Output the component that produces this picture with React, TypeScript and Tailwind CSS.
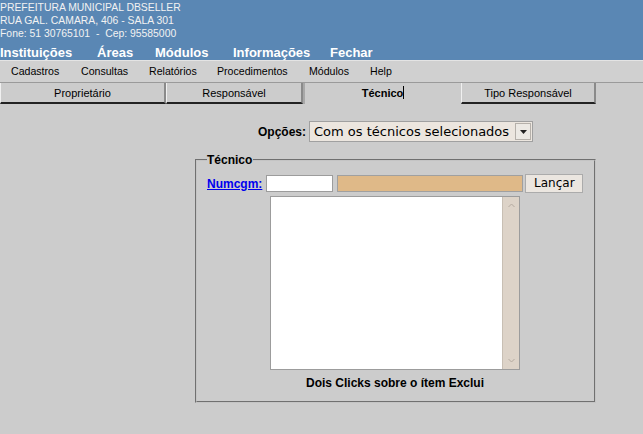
import React from 'react';

const menuTop = [
  { label: 'Instituições', width: 'w-[97px]' },
  { label: 'Áreas', width: 'w-[58px]' },
  { label: 'Módulos', width: 'w-[78px]' },
  { label: 'Informações', width: 'w-[97px]' },
  { label: 'Fechar', width: 'w-[60px]' },
];

const menuSub = [
  { label: 'Cadastros', width: 'w-[70px]' },
  { label: 'Consultas', width: 'w-[68px]' },
  { label: 'Relatórios', width: 'w-[68px]' },
  { label: 'Procedimentos', width: 'w-[92px]' },
  { label: 'Módulos', width: 'w-[61px]' },
  { label: 'Help', width: 'w-[40px]' },
];

const tabs = [
  { label: 'Proprietário', width: 'w-[166px]' },
  { label: 'Responsável', width: 'w-[137px]' },
  { label: 'Técnico', width: 'w-[158px]', active: true },
  { label: 'Tipo Responsável', width: 'w-[135px]' },
];

const App: React.FC = () => {
  return (
    <div className="min-h-screen bg-[#cccccc] font-['Liberation_Sans',Arial,sans-serif] text-black">
      {/* cabeçalho */}
      <div className="h-[60px] bg-[#5a87b4] text-[#f2f2f2]">
        <div className="pt-[1px] text-[10.4px] leading-[13px]">
          <div>PREFEITURA MUNICIPAL DBSELLER</div>
          <div>RUA GAL. CAMARA, 406 - SALA 301</div>
          <div className="whitespace-pre">Fone: 51 30765101  -  Cep: 95585000</div>
        </div>
        <div className="mt-[5px] flex text-[13px] font-bold leading-[15px] text-white">
          {menuTop.map((item) => (
            <span key={item.label} className={`${item.width} shrink-0 whitespace-nowrap`}>
              {item.label}
            </span>
          ))}
        </div>
      </div>

      <div className="flex h-[23px] items-center border-t border-[#e4e4e4] border-b border-b-[#9a9a9a] bg-[#d0d0d0] pl-[11px] text-[10.6px]">
        {menuSub.map((item) => (
          <span key={item.label} className={`${item.width} shrink-0 whitespace-nowrap`}>
            {item.label}
          </span>
        ))}
      </div>

      {/* abas */}
      <div className="flex h-[21px]">
        {tabs.map((tab) =>
          tab.active ? (
            <div
              key={tab.label}
              className={`${tab.width} flex items-start justify-center border-l-[2px] border-l-[#a8a8a8] pt-[2px] text-[11px] font-bold`}
            >
              <span>{tab.label}</span>
              <span className="mt-[1px] h-[13px] w-px bg-black" />
            </div>
          ) : (
            <div
              key={tab.label}
              className={`${tab.width} flex items-start justify-center border-l border-l-[#f0f0f0] border-r-[2px] border-r-[#8a8a8a] border-b-[2px] border-b-[#222] pt-[2px] text-[11px]`}
            >
              {tab.label}
            </div>
          ),
        )}
      </div>

      {/* opções */}
      <div className="mt-[17px] flex items-center pl-[258px]">
        <span className="text-[12px] font-bold">Opções:</span>
        <div className="ml-[3px] flex h-[21px] w-[224px] items-center justify-between border border-[#a0a0a0] bg-[#ece6df] pl-[4px] pr-[1px] font-['DejaVu_Sans',sans-serif] text-[13px]">
          <span className="whitespace-nowrap">Com os técnicos selecionados</span>
          <span className="flex h-[17px] w-[16px] shrink-0 items-center justify-center border border-[#b5b0aa] bg-[#ece9e4]">
            <svg width="7" height="4" viewBox="0 0 7 4">
              <path d="M0 0h7L3.5 4z" fill="#222" />
            </svg>
          </span>
        </div>
      </div>

      {/* técnico */}
      <fieldset className="ml-[195px] mt-[11px] h-[250px] w-[401px] border-2 border-[#c4c4c4] pl-[10px] pr-[10px] [border-style:groove]">
        <legend className="pr-[1px] text-[12px] font-bold leading-[14px]">Técnico</legend>
        <div className="mt-[7px] flex items-center">
          <a href="#" className="text-[12px] font-bold text-[#0000ee] underline">
            Numcgm:
          </a>
          <input
            className="ml-[4px] h-[17px] w-[67px] border border-[#9c9c9c] bg-white outline-none"
            type="text"
          />
          <input
            className="ml-[4px] h-[17px] w-[186px] border border-[#a0a0a0] bg-[#dfb988] outline-none"
            type="text"
            readOnly
          />
          <button className="ml-[2px] h-[19px] w-[58px] border border-[#ababab] bg-[#ebe6e0] font-['DejaVu_Sans',sans-serif] text-[12px] leading-[15px]">
            Lançar
          </button>
        </div>
        <div className="ml-[63px] mt-[3px] flex h-[174px] w-[250px] border border-[#9c9c9c] bg-white">
          <div className="flex-1" />
          <div className="flex w-[17px] flex-col justify-between border-l border-[#c8bfb4] bg-[#ddd3c8] py-[4px]">
            <svg width="17" height="8" viewBox="0 0 17 8">
              <path d="M5.5 6l3-3 3 3" stroke="#b4aaa0" fill="none" />
            </svg>
            <svg width="17" height="8" viewBox="0 0 17 8">
              <path d="M5.5 2l3 3 3-3" stroke="#b4aaa0" fill="none" />
            </svg>
          </div>
        </div>
        <div className="ml-[63px] mt-[4px] w-[250px] text-center text-[12px] font-bold">
          Dois Clicks sobre o ítem Exclui
        </div>
      </fieldset>
    </div>
  );
};

export default App;
